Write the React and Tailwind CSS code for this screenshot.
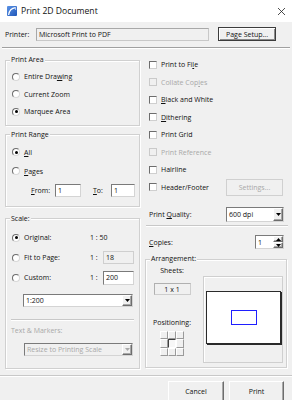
import React from 'react';

const sunken = 'border border-t-[#7a7a7a] border-l-[#7a7a7a] border-r-[#d4d4d4] border-b-[#d4d4d4]';
const raised = 'border border-t-white border-l-white border-r-[#6d6d6d] border-b-[#6d6d6d] shadow-[inset_-1px_-1px_0_#a8a8a8]';
const groupBox = 'border border-[#d0d0d0] shadow-[inset_1px_1px_0_#fff,1px_1px_0_#fff] min-w-0';
const dim = 'text-[#a8a8a8]';

const Arrow = ({ up, color = '#000' }) => (
  <svg width="5" height="3" viewBox="0 0 5 3">
    <path d={up ? 'M0 3H5L2.5 0Z' : 'M0 0H5L2.5 3Z'} fill={color} />
  </svg>
);

const Radio = ({ checked }) => (
  <span className="w-[8px] h-[8px] shrink-0 rounded-full bg-white border border-t-[#6d6d6d] border-l-[#6d6d6d] border-r-[#d8d8d8] border-b-[#d8d8d8] flex items-center justify-center">
    {checked && <span className="w-[3px] h-[3px] rounded-full bg-black" />}
  </span>
);

const Check = ({ disabled }) => (
  <span
    className={`w-[8px] h-[8px] shrink-0 border ${
      disabled
        ? 'bg-[#f0f0f0] border-[#cacaca]'
        : 'bg-white border-t-[#6d6d6d] border-l-[#6d6d6d] border-r-[#cfcfcf] border-b-[#cfcfcf]'
    }`}
  />
);

const CheckRow = ({ children, disabled }) => (
  <div className="h-[17.5px] flex items-center">
    <Check disabled={disabled} />
    <span className={`ml-[4px] ${disabled ? dim : ''}`}>{children}</span>
  </div>
);

const Legend = ({ children, className = '' }) => (
  <legend className={`px-[1px] h-[8px] leading-[8px] bg-[#f0f0f0] ${className}`}>{children}</legend>
);

const Combo = ({ value, className = '', disabled }) => (
  <div className={`flex items-stretch ${disabled ? 'bg-[#f0f0f0]' : 'bg-white'} ${sunken} ${className}`}>
    <span className={`flex-1 pl-[2px] flex items-center truncate ${disabled ? dim : ''}`}>{value}</span>
    <span className={`w-[10px] flex items-center justify-center bg-[#f0f0f0] ${raised}`}>
      <Arrow color={disabled ? '#a8a8a8' : '#000'} />
    </span>
  </div>
);

const Button = ({ children, className = '', disabled, isDefault }) => (
  <button
    className={`flex items-center justify-center bg-[#f0f0f0] ${
      disabled
        ? 'border border-[#d0d0d0] text-[#a8a8a8]'
        : isDefault
        ? 'border border-[#3c3c3c] shadow-[inset_1px_1px_0_#fff,inset_-1px_-1px_0_#8a8a8a]'
        : raised
    } ${className}`}
  >
    {children}
  </button>
);

export default function App() {
  return (
    <div className="w-[292px] h-[400px] overflow-hidden bg-[#f0f0f0] font-['Open_Sans',sans-serif] text-[7px] leading-none text-[#111]">
      {/* title bar */}
      <div className="h-[22px] bg-white flex items-center pl-[7px] pr-[7px]">
        <svg width="10" height="10" viewBox="0 0 10 10">
          <defs>
            <linearGradient id="ic" x1="0" y1="0" x2="1" y2="1">
              <stop offset="0" stopColor="#5b93e6" />
              <stop offset="1" stopColor="#1f56b8" />
            </linearGradient>
          </defs>
          <rect x="0" y="0" width="10" height="10" rx="1" fill="url(#ic)" />
          <path d="M1.6 9 Q2.4 2.2 8.6 1.6" stroke="#fff" strokeWidth="1.2" fill="none" />
          <path d="M8.6 1.6 L8.6 4" stroke="#cfe0ff" strokeWidth="0.8" />
        </svg>
        <span className="ml-[4px] text-[8.6px]">Print 2D Document</span>
        <svg className="ml-auto" width="7" height="7" viewBox="0 0 7 7">
          <path d="M0 0L7 7M7 0L0 7" stroke="#222" strokeWidth="0.8" />
        </svg>
      </div>

      {/* printer row */}
      <div className="mt-[5px] h-[14px] flex items-center pl-[5px]">
        <span className="w-[31px]">Printer:</span>
        <div className="w-[173px] h-[13px] flex items-center pl-[2px] bg-[#f0f0f0] border border-[#c8c8c8] border-t-[#a8a8a8] border-l-[#a8a8a8]">
          Microsoft Print to PDF
        </div>
        <Button isDefault className="ml-[9px] w-[58px] h-[14px]">Page Setup...</Button>
      </div>

      <div className="mt-[6px] mx-[2px] h-[2px] border-t border-t-[#a0a0a0] border-b border-b-white" />

      <div className="flex">
        {/* left column */}
        <div className="ml-[5px] w-[135px] shrink-0">
          <fieldset className={`mt-[7px] ${groupBox}`}>
            <Legend className="ml-[4px]">Print Area</Legend>
            <div className="pt-[4px] pb-[4px] pl-[6px]">
              <div className="h-[17.5px] flex items-center gap-[4px]">
                <Radio />
                <span>Entire Dra<u className="underline-offset-1">w</u>ing</span>
              </div>
              <div className="h-[17.5px] flex items-center gap-[4px]">
                <Radio />
                <span>Current Zoom</span>
              </div>
              <div className="h-[17.5px] flex items-center gap-[4px]">
                <Radio checked />
                <span>Marquee Area</span>
              </div>
            </div>
          </fieldset>

          <fieldset className={`mt-[5px] ${groupBox}`}>
            <Legend className="ml-[4px]">Print Range</Legend>
            <div className="pt-[4px] pb-[9px] pl-[6px]">
              <div className="h-[19px] flex items-center gap-[4px]">
                <Radio checked />
                <span><u className="underline-offset-1">A</u>ll</span>
              </div>
              <div className="h-[19px] flex items-center gap-[4px]">
                <Radio />
                <span><u className="underline-offset-1">P</u>ages</span>
              </div>
              <div className="mt-[3px] h-[13px] flex items-center pl-[19px]">
                <span className="w-[24px]"><u className="underline-offset-1">F</u>rom:</span>
                <div className={`w-[26px] h-[13px] bg-white flex items-center pl-[2px] ${sunken}`}>1</div>
                <span className="ml-[12px] w-[18px]"><u className="underline-offset-1">T</u>o:</span>
                <div className={`w-[24px] h-[13px] bg-white flex items-center pl-[2px] ${sunken}`}>1</div>
              </div>
            </div>
          </fieldset>

          <fieldset className={`mt-[8px] ${groupBox}`}>
            <Legend className="ml-[4px]">Scale:</Legend>
            <div className="pt-[5px] pb-[12px] pl-[6px]">
              <div className="h-[20px] flex items-center">
                <div className="w-[78px] flex items-center gap-[4px]">
                  <Radio checked />
                  <span>Original:</span>
                </div>
                <span>1 : 50</span>
              </div>
              <div className="h-[20px] flex items-center">
                <div className="w-[78px] flex items-center gap-[4px]">
                  <Radio />
                  <span>Fit to Page:</span>
                </div>
                <span className="w-[13px]">1 :</span>
                <div className="w-[31px] h-[13px] flex items-center pl-[2px] bg-[#f0f0f0] border border-[#cfcfcf]">18</div>
              </div>
              <div className="h-[20px] flex items-center">
                <div className="w-[78px] flex items-center gap-[4px]">
                  <Radio />
                  <span>Custom:</span>
                </div>
                <span className="w-[13px]">1 :</span>
                <div className={`w-[31px] h-[14px] flex items-center pl-[2px] bg-white ${sunken}`}>200</div>
              </div>
              <Combo value="1:200" className="mt-[6px] ml-[11px] w-[110px] h-[13px]" />
              <div className="mt-[12px] -ml-[1px] w-[123px] h-[2px] border-t border-t-[#c8c8c8] border-b border-b-white" />
              <div className={`mt-[5px] -ml-[1px] h-[10px] flex items-center ${dim}`}>Text &amp; Markers:</div>
              <Combo disabled value="Resize to Printing Scale" className="mt-[7px] ml-[12px] w-[109px] h-[13px]" />
            </div>
          </fieldset>
        </div>

        {/* right column */}
        <div className="ml-[9px] w-[138px] shrink-0">
          <div className="mt-[7px]">
            <CheckRow>Print to Fi<u className="underline-offset-1">l</u>e</CheckRow>
            <CheckRow disabled>Collate Cop<u className="underline-offset-1">i</u>es</CheckRow>
            <CheckRow><u className="underline-offset-1">B</u>lack and White</CheckRow>
            <CheckRow><u className="underline-offset-1">D</u>ithering</CheckRow>
            <CheckRow>Print Grid</CheckRow>
            <CheckRow disabled>Print Reference</CheckRow>
            <CheckRow>Hairline</CheckRow>
            <div className="h-[17.5px] flex items-center">
              <div className="w-[77px] flex items-center">
                <Check />
                <span className="ml-[4px]">Header/Footer</span>
              </div>
              <Button disabled className="w-[57px] h-[17px]">Settings...</Button>
            </div>
          </div>

          <div className="mt-[11px] h-[15px] flex items-center">
            <span className="w-[77px]">Print <u className="underline-offset-1">Q</u>uality:</span>
            <Combo value="600 dpi" className="w-[58px] h-[15px]" />
          </div>

          <div className="mt-[3px] -ml-[3px] w-[142px] h-[2px] border-t border-t-[#c8c8c8] border-b border-b-white" />

          <div className="mt-[8px] h-[14px] flex items-center">
            <span className="w-[106px]"><u className="underline-offset-1">C</u>opies:</span>
            <div className={`w-[29px] h-[14px] flex bg-white ${sunken}`}>
              <span className="flex-1 pl-[2px] flex items-center">1</span>
              <div className="w-[10px] flex flex-col">
                <span className={`flex-1 flex items-center justify-center bg-[#f0f0f0] ${raised}`}><Arrow up /></span>
                <span className={`flex-1 flex items-center justify-center bg-[#f0f0f0] ${raised}`}><Arrow /></span>
              </div>
            </div>
          </div>

          <fieldset className={`mt-[6px] -ml-[4px] w-[142px] ${groupBox}`}>
            <Legend className="ml-[4px]">Arrangement:</Legend>
            <div className="flex pb-[4px]">
              <div className="ml-[6px] w-[40px] flex flex-col items-center">
                <div className="mt-[3px] h-[9px] leading-[9px]">Sheets:</div>
                <div className="mt-[8px] w-[37px] h-[12px] flex items-center justify-center border border-[#cdcdcd] border-t-[#b0b0b0] border-l-[#b0b0b0]">1 x 1</div>
                <div className="mt-[23px] h-[9px] leading-[9px]">Positioning:</div>
                <div className="mt-[4px] grid grid-cols-3 w-[24px] h-[25px]">
                  {[0, 1, 2, 3, 4, 5, 6, 7, 8].map((i) => (
                    <span
                      key={i}
                      className={
                        i === 4
                          ? 'bg-[#f7f7f7] border-t-[1.5px] border-l-[1.5px] border-t-[#404040] border-l-[#404040] border-b border-r border-b-white border-r-white'
                          : 'bg-[#f0f0f0] border border-t-white border-l-white border-r-[#9a9a9a] border-b-[#9a9a9a]'
                      }
                    />
                  ))}
                </div>
              </div>
              <div className="mt-[13px] ml-[11px] w-[80px] h-[87px] border border-[#cfcfcf] shadow-[inset_1px_1px_0_#fff]">
                <div className="mt-[14px] ml-[2px] w-[75px] h-[53px] bg-white border border-[#2a2a2a] shadow-[1px_1px_0_#2a2a2a] flex items-center justify-center">
                  <div className="w-[26px] h-[15px] border-[1.5px] border-[#1f1fff]" />
                </div>
              </div>
            </div>
          </fieldset>
        </div>
      </div>

      <div className="mt-[6px] h-[2px] border-t border-t-[#c8c8c8] border-b border-b-white" />

      <div className="mt-[4px] flex justify-end pr-[8px] gap-[5px]">
        <Button className="w-[56px] h-[22px]">Cancel</Button>
        <Button className="w-[55px] h-[22px]">Print</Button>
      </div>
    </div>
  );
}
